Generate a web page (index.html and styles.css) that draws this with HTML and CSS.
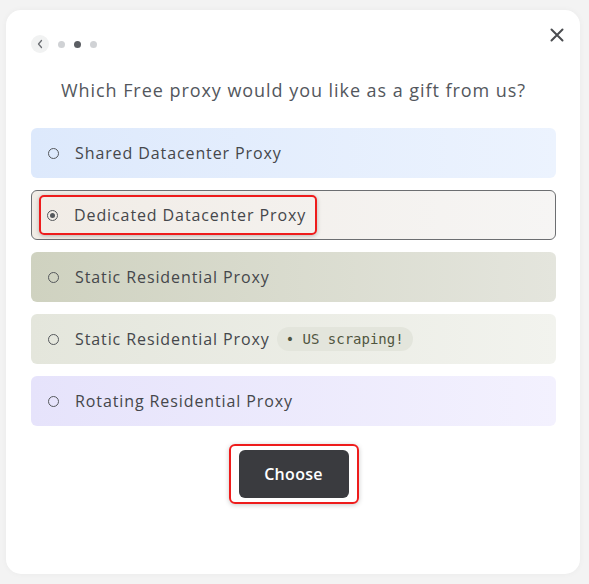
FILE: index.html
```html
<!DOCTYPE html>
<html>
<head>
<meta charset="utf-8">
<link rel="stylesheet" href="styles.css">
</head>
<body>
<div class="card">
  <button class="close" aria-label="Close">
    <svg width="14" height="14" viewBox="0 0 14 14"><path d="M1.5 1.5L12.5 12.5M12.5 1.5L1.5 12.5" stroke="#4a4c50" stroke-width="2" stroke-linecap="round"/></svg>
  </button>
  <div class="steps">
    <span class="back">
      <svg width="8" height="10" viewBox="0 0 8 10"><path d="M5.5 1.5L2.5 5L5.5 8.5" stroke="#6b6e73" stroke-width="1.3" fill="none" stroke-linecap="round" stroke-linejoin="round"/></svg>
    </span>
    <span class="dot"></span>
    <span class="dot active"></span>
    <span class="dot"></span>
  </div>
  <h1 class="title">Which Free proxy would you like as a gift from us?</h1>
  <div class="options">
    <div class="option opt-blue"><span class="radio"></span><span class="label">Shared Datacenter Proxy</span></div>
    <div class="option opt-selected"><span class="hl"><span class="radio checked"></span><span class="label">Dedicated Datacenter Proxy</span></span></div>
    <div class="option opt-olive"><span class="radio"></span><span class="label">Static Residential Proxy</span></div>
    <div class="option opt-sage"><span class="radio"></span><span class="label">Static Residential Proxy</span><span class="badge">• US scraping!</span></div>
    <div class="option opt-lilac"><span class="radio"></span><span class="label">Rotating Residential Proxy</span></div>
  </div>
  <div class="actions">
    <div class="btn-hl"><button class="choose">Choose</button></div>
  </div>
</div>
</body>
</html>
```
FILE: styles.css
```css
html, body {
  margin: 0;
  padding: 0;
}
body {
  background: #f3f3f3;
  font-family: "Open Sans", "Liberation Sans", sans-serif;
  width: 589px;
  height: 584px;
  overflow: hidden;
}
.card {
  position: relative;
  box-sizing: border-box;
  margin: 10px 0 0 6px;
  width: 574px;
  height: 564px;
  background: #ffffff;
  border-radius: 15px;
  padding: 25px 24px 0 25px;
  box-shadow: 0 0 6px rgba(0,0,0,0.04);
}
.close {
  position: absolute;
  top: 15px;
  right: 13px;
  width: 20px;
  height: 20px;
  padding: 0;
  border: 0;
  background: none;
  display: flex;
  align-items: center;
  justify-content: center;
}
.steps {
  display: flex;
  align-items: center;
  gap: 9px;
  height: 18px;
}
.back {
  width: 18px;
  height: 18px;
  border-radius: 50%;
  background: #f1f2f2;
  display: flex;
  align-items: center;
  justify-content: center;
}
.dot {
  width: 7px;
  height: 7px;
  border-radius: 50%;
  background: #d0d2d5;
}
.dot.active {
  background: #5b5e63;
}
.title {
  margin: 25px 0 0;
  text-align: center;
  font-size: 18px;
  line-height: 24px;
  font-weight: 400;
  letter-spacing: 0.95px;
  color: #53575d;
}
.options {
  margin-top: 26px;
  display: flex;
  flex-direction: column;
  gap: 12px;
}
.option {
  box-sizing: border-box;
  height: 50px;
  border-radius: 6px;
  display: flex;
  align-items: center;
  padding-left: 17px;
  font-size: 16px;
  letter-spacing: 0.9px;
  color: #45474b;
}
.opt-blue { background: linear-gradient(90deg, #dde9fc, #ecf3fe); }
.opt-selected {
  background: linear-gradient(90deg, #f1ece6, #f6f5f4);
  border: 1px solid #6c6e71;
  padding-left: 7px;
}
.opt-olive { background: linear-gradient(90deg, #cfd2c0, #e4e5dd); }
.opt-sage { background: linear-gradient(90deg, #e4e6dc, #f2f3ee); }
.opt-lilac { background: linear-gradient(90deg, #e6e3fb, #f3f1fe); }
.hl {
  display: flex;
  align-items: center;
  box-sizing: border-box;
  height: 40px;
  padding: 0 9px 0 6px;
  border: 2px solid #ee1c1c;
  border-radius: 5px;
  box-shadow: 0 1px 4px rgba(0,0,0,0.25);
}
.radio {
  box-sizing: border-box;
  width: 11px;
  height: 11px;
  border-radius: 50%;
  border: 1px solid #55585c;
  margin-right: 16px;
  flex: none;
  position: relative;
}
.radio.checked::after {
  content: "";
  position: absolute;
  left: 2px;
  top: 2px;
  width: 5px;
  height: 5px;
  border-radius: 50%;
  background: #55585c;
}
.label {
  white-space: nowrap;
}
.badge {
  margin-left: 7px;
  height: 24px;
  padding: 0 9px 0 9px;
  border-radius: 12px;
  background: #e3e5dc;
  display: flex;
  align-items: center;
  font-family: "DejaVu Sans Mono", "Liberation Mono", monospace;
  font-size: 14px;
  letter-spacing: 0;
  color: #50553f;
}
.actions {
  margin-top: 18px;
  display: flex;
  justify-content: center;
}
.btn-hl {
  box-sizing: border-box;
  padding: 4px 8px;
  border: 2px solid #ee1c1c;
  border-radius: 6px;
  box-shadow: 0 1px 5px rgba(0,0,0,0.22);
}
.choose {
  display: block;
  width: 110px;
  height: 48px;
  border: 0;
  border-radius: 6px;
  background: #3a3b3f;
  color: #ffffff;
  font-family: "Open Sans", "Liberation Sans", sans-serif;
  font-size: 16px;
  font-weight: 600;
  letter-spacing: 0.3px;
}
```
